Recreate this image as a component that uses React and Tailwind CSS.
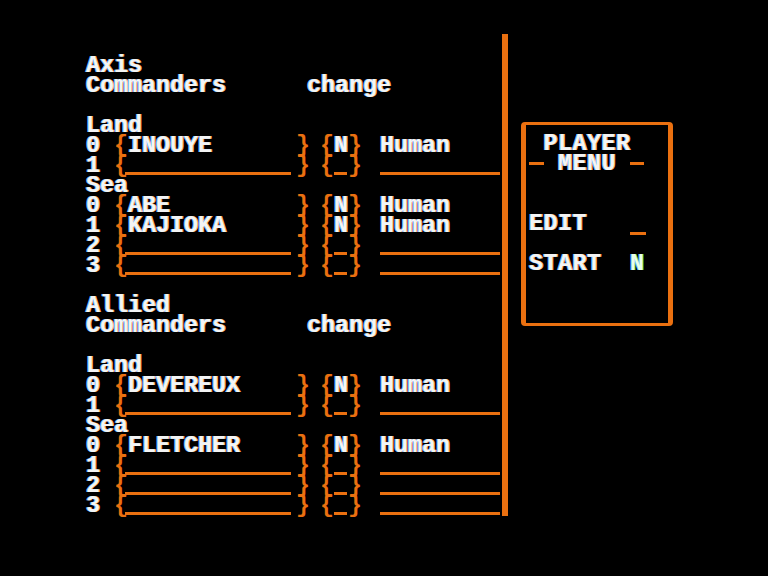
import React from 'react';

// Apple II style "player menu" screen
const W = "text-[#f4f4f4] [text-shadow:-1px_0_#6ab4ff,1px_0_#ffa860]";
const O = "text-[#ea7010]";
const LINE = "h-[3px] bg-[#ea7010]";

const Row = ({ children }) => (
    <div className="box-border flex h-[20px] items-start whitespace-pre pt-[2px]">{children}</div>
);

const Label = ({ text }) => (
    <Row>
        <span className={W}>{text}</span>
    </Row>
);

const Header = ({ text }) => (
    <Row>
        <span className={`w-[221px] ${W}`}>{text}</span>
        <span className={W}>change</span>
    </Row>
);

const Slot = ({ n, name }) => (
    <Row>
        <span className={`w-[28px] ${W}`}>{n}</span>
        <span className={`w-[14px] ${O}`}>{'{'}</span>
        <div className="w-[168px]">
            {name ? <span className={W}>{name}</span> : <div className={`mt-[15px] -ml-[3px] w-[166px] ${LINE}`} />}
        </div>
        <span className={`w-[14px] ${O}`}>{'}'}</span>
        <div className="w-[10px]" />
        <span className={`w-[14px] ${O}`}>{'{'}</span>
        <div className="w-[14px]">
            {name ? <span className={W}>N</span> : <div className={`mt-[15px] w-[13px] ${LINE}`} />}
        </div>
        <span className={`w-[14px] ${O}`}>{'}'}</span>
        <div className="w-[18px]" />
        <div className="w-[120px]">
            {name ? <span className={W}>Human</span> : <div className={`mt-[15px] w-[120px] ${LINE}`} />}
        </div>
    </Row>
);

const Blank = () => <div className="h-[20px]" />;

const PlayerMenu = () => (
    <div className="mt-[88px] h-[204px] w-[152px] rounded-[4px] border-x-[5px] border-y-[3px] border-[#ea7010] pl-[3px] pt-[8px] tracking-[0.5px]">
        <Row>
            <span className="w-[14.5px]" />
            <span className={W}>PLAYER</span>
        </Row>
        <Row>
            <div className={`mt-[7px] w-[15px] ${LINE}`} />
            <span className="w-[14px]" />
            <span className={`w-[72px] ${W}`}>MENU</span>
            <div className={`mt-[7px] w-[14px] ${LINE}`} />
        </Row>
        <Blank />
        <Blank />
        <Row>
            <span className={`w-[101px] ${W}`}>EDIT</span>
            <div className={`mt-[17px] w-[16px] ${LINE}`} />
        </Row>
        <Blank />
        <Row>
            <span className={`w-[101px] ${W}`}>START</span>
            <span className="text-[#e8ffe8] [text-shadow:-1px_0_#6ab4ff,1px_0_#3ccf4a]">N</span>
        </Row>
    </div>
);

const App = () => {
    return (
        <div className="flex h-[576px] w-[768px] overflow-hidden bg-black pt-[34px] font-['Liberation_Mono',monospace] text-[23.33px] leading-[18px] font-bold">
            <div className="ml-[86px] w-[416px] pt-[21px]">
                <Label text="Axis" />
                <Header text="Commanders" />
                <Blank />
                <Label text="Land" />
                <Slot n="0" name="INOUYE" />
                <Slot n="1" />
                <Label text="Sea" />
                <Slot n="0" name="ABE" />
                <Slot n="1" name="KAJIOKA" />
                <Slot n="2" />
                <Slot n="3" />
                <Blank />
                <Label text="Allied" />
                <Header text="Commanders" />
                <Blank />
                <Label text="Land" />
                <Slot n="0" name="DEVEREUX" />
                <Slot n="1" />
                <Label text="Sea" />
                <Slot n="0" name="FLETCHER" />
                <Slot n="1" />
                <Slot n="2" />
                <Slot n="3" />
            </div>
            <div className="h-[482px] w-[6px] bg-[#ea7010]" />
            <div className="ml-[13px]">
                <PlayerMenu />
            </div>
        </div>
    );
};

export default App;
